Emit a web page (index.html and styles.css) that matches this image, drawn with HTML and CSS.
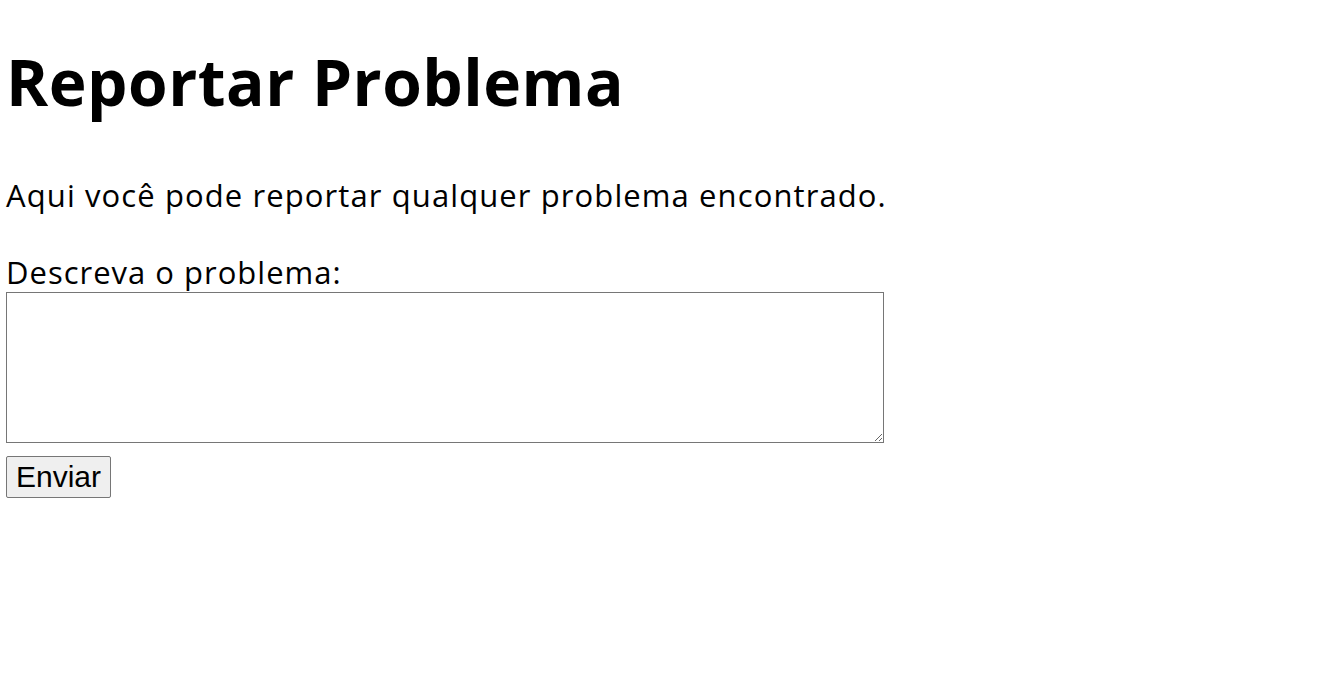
FILE: index.html
```html
<!DOCTYPE html>
<html lang="pt-BR">
<head>
<meta charset="utf-8">
<title>Reportar Problema</title>
<link rel="stylesheet" href="styles.css">
</head>
<body>
<main class="page">
  <h1 class="title">Reportar Problema</h1>
  <p class="intro">Aqui você pode reportar qualquer problema encontrado.</p>
  <form class="report-form">
    <label class="field-label" for="problema">Descreva o problema:</label>
    <textarea class="field-text" id="problema" name="problema"></textarea>
    <button class="submit-btn" type="submit">Enviar</button>
  </form>
</main>
</body>
</html>
```
FILE: styles.css
```css
html, body {
  margin: 0;
  padding: 0;
  background: #ffffff;
}

.page {
  padding: 0 6px;
  font-family: "Open Sans", "Noto Sans", sans-serif;
  color: #000000;
}

.title {
  margin: 42px 0 0 0;
  font-size: 64px;
  line-height: 80px;
  font-weight: 700;
  letter-spacing: 0.5px;
}

.intro {
  margin: 53px 0 0 0;
  font-size: 31px;
  line-height: 40px;
  letter-spacing: 1.1px;
}

.report-form {
  margin-top: 37px;
  display: flex;
  flex-direction: column;
  align-items: flex-start;
}

.field-label {
  font-size: 31px;
  line-height: 40px;
  letter-spacing: 1px;
}

.field-text {
  box-sizing: border-box;
  margin: 0;
  width: 878px;
  height: 151px;
  border: 1px solid #767676;
  border-radius: 0;
  padding: 2px;
  background: #ffffff;
}

.submit-btn {
  box-sizing: border-box;
  margin-top: 13px;
  width: 105px;
  height: 42px;
  padding: 0;
  font-family: "Liberation Sans", Arial, sans-serif;
  font-size: 30px;
  color: #000000;
  background: #efefef;
  border: 1px solid #767676;
  border-radius: 2px;
}
```
